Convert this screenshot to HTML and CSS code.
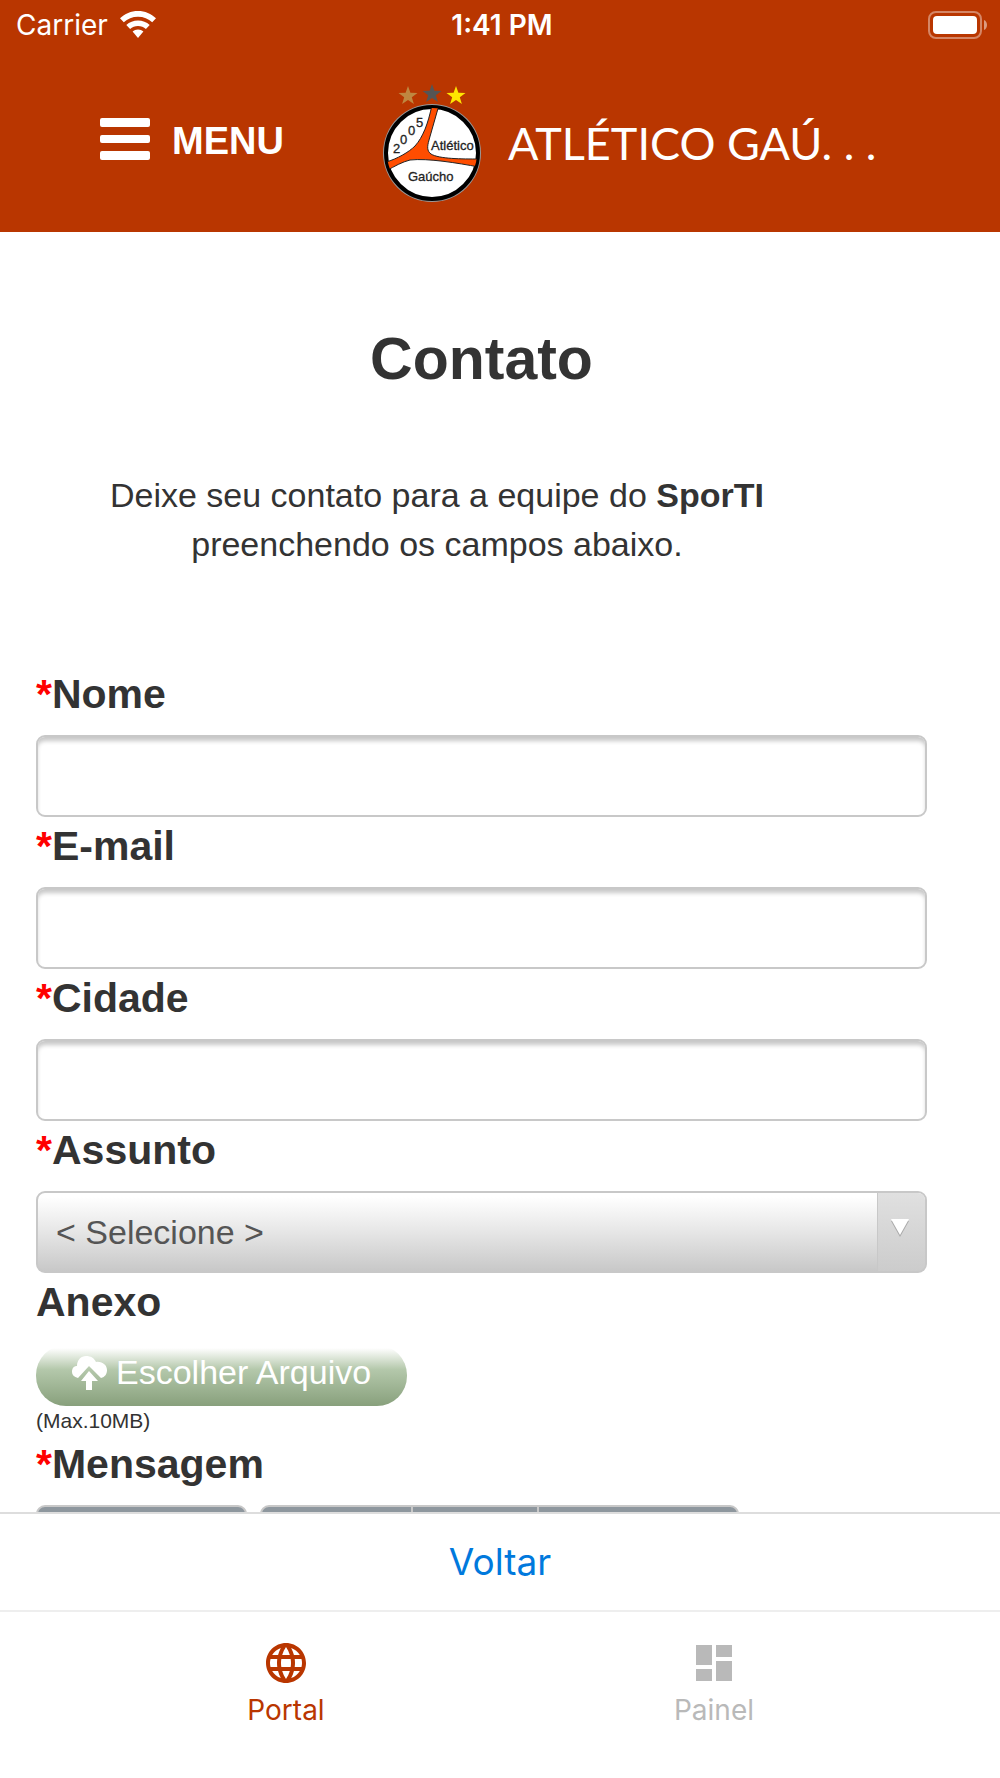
FILE: index.html
```html
<!DOCTYPE html>
<html lang="pt-BR">
<head>
  <meta charset="UTF-8">
  <meta name="viewport" content="width=device-width, initial-scale=1">
  <title>Contato</title>
  <link rel="stylesheet" href="styles.css">
</head>
<body>
  <header class="header">
    <div class="status">
      <div class="carrier">
        <span>Carrier</span>
        <svg width="36" height="28" viewBox="0 0 36 28" fill="#fff">
          <path d="M18 0C11 0 4.800 2.700 0 7.300l3.800 4C7.500 7.800 12.500 5.800 18 5.800s10.500 2 14.200 5.500l3.800-4C31.200 2.700 25 0 18 0z"/>
          <path d="M18 9.500c-4.500 0-8.600 1.700-11.700 4.500l3.800 4c2.100-1.900 4.900-3 7.900-3s5.800 1.100 7.900 3l3.800-4c-3.100-2.800-7.200-4.500-11.700-4.500z"/>
          <path d="M18 18.500c-2.100 0-4 .8-5.400 2.100L18 27l5.400-6.400c-1.400-1.300-3.300-2.100-5.400-2.100z"/>
        </svg>
      </div>
      <span class="time">1:41 PM</span>
      <svg class="battery" width="60" height="28" viewBox="0 0 60 28">
        <rect x="1" y="1" width="52" height="26" rx="7" fill="none" stroke="#fff" stroke-opacity=".4" stroke-width="2"/>
        <rect x="5" y="5" width="44" height="18" rx="4" fill="#fff"/>
        <path d="M56 9c4 1.500 4 8.500 0 10z" fill="#fff" fill-opacity=".5"/>
      </svg>
    </div>
    <div class="navbar">
      <button class="menu" type="button">
        <svg width="50" height="42" viewBox="0 0 50 42" fill="#fff">
          <rect width="50" height="9" rx="2"/>
          <rect y="17" width="50" height="8" rx="2"/>
          <rect y="33" width="50" height="9" rx="2"/>
        </svg>
        <span>MENU</span>
      </button>
      <a class="club" href="#">
        <svg class="crest" width="100" height="120" viewBox="0 0 100 120">
          <defs>
            <path id="star" d="M0-10 2.400-3.200 9.500-3.100 3.800 1.200 5.900 8.100 0 4 -5.900 8.100 -3.800 1.200 -9.500-3.100 -2.400-3.200z"/>
            <clipPath id="ball"><circle cx="50" cy="70" r="45"/></clipPath>
          </defs>
          <use href="#star" x="26" y="13" fill="#bf8740"/>
          <use href="#star" x="50" y="11" fill="#555"/>
          <use href="#star" x="74" y="13" fill="#ffe600"/>
          <circle cx="50" cy="70" r="49" fill="#999"/>
          <circle cx="50" cy="70" r="46" fill="#fff" stroke="#000" stroke-width="4"/>
          <path clip-path="url(#ball)" fill="#ff4d00" stroke="#222" stroke-width="1"
            d="M50 22C46 41 41 54 33 63 27 69 15 76 4 79L4 88C13 83 20 79 28 77 46 75 75 80 97 84L97 76C80 76 57 76 49 71 45 68 45 64 47 57L57 22z"/>
          <g class="crest-text">
            <text x="11" y="70">2</text>
            <text x="18" y="61">0</text>
            <text x="26" y="52">0</text>
            <text x="34" y="44">5</text>
            <text x="49" y="67">Atlético</text>
            <text x="26" y="98">Gaúcho</text>
          </g>
        </svg>
        <span>ATLÉTICO GAÚ. . .</span>
      </a>
    </div>
  </header>

  <main class="content">
    <h1>Contato</h1>
    <p class="intro">Deixe seu contato para a equipe do <strong>SporTI</strong> preenchendo os campos abaixo.</p>

    <form class="form">
      <label for="nome"><span class="required">*</span>Nome</label>
      <input class="field" type="text" id="nome">

      <label for="email"><span class="required">*</span>E-mail</label>
      <input class="field" type="email" id="email">

      <label for="cidade"><span class="required">*</span>Cidade</label>
      <input class="field" type="text" id="cidade">

      <label for="assunto"><span class="required">*</span>Assunto</label>
      <div class="select">
        <select class="field" id="assunto">
          <option>&lt; Selecione &gt;</option>
        </select>
        <span class="arrow">
          <svg width="18" height="18" viewBox="0 0 18 18">
            <path d="M0 2h18L9 18z" fill="#aaa"/>
            <path d="M0 0h18L9 16z" fill="#fff"/>
          </svg>
        </span>
      </div>

      <label for="anexo">Anexo</label>
      <div class="upload">
        <svg width="36" height="34" viewBox="0 0 36 34" fill="#fff">
          <path d="M6 22C2 21 0 19 0 16c0-4 2-6 5-6C5 4 9 0 14 0c5 0 8 2 10 6 6-1 11 3 11 8 0 4-2 7-6 8L17 10z"/>
          <path d="M17 15l9 10h-6v9h-6v-9H9z"/>
        </svg>
        <span>Escolher Arquivo</span>
        <input type="file" id="anexo">
      </div>
      <small>(Max.10MB)</small>

      <label for="mensagem"><span class="required">*</span>Mensagem</label>
      <div class="toolbar">
        <div class="group style"></div>
        <div class="group format">
          <span></span>
          <span></span>
          <span></span>
        </div>
      </div>
      <textarea class="field" id="mensagem"></textarea>
    </form>
  </main>

  <div class="back"><a href="#">Voltar</a></div>

  <nav class="tabs">
    <a class="active" href="#">
      <svg width="48" height="48" viewBox="0 0 24 24" fill="currentColor">
        <path d="M11.990 2C6.470 2 2 6.480 2 12s4.470 10 9.990 10C17.520 22 22 17.520 22 12S17.520 2 11.990 2zm6.930 6h-2.950c-.32-1.250-.78-2.450-1.380-3.560 1.840.63 3.370 1.910 4.330 3.560zM12 4.040c.83 1.200 1.480 2.530 1.910 3.960h-3.820c.43-1.430 1.080-2.760 1.910-3.960zM4.260 14C4.100 13.360 4 12.690 4 12s.1-1.360.26-2h3.380c-.08.66-.14 1.320-.14 2s.06 1.340.14 2H4.260zm.82 2h2.950c.32 1.250.78 2.450 1.380 3.560-1.840-.63-3.370-1.900-4.330-3.560zm2.950-8H5.080c.96-1.660 2.490-2.930 4.330-3.560C8.810 5.550 8.350 6.750 8.030 8zM12 19.960c-.83-1.200-1.480-2.530-1.910-3.960h3.820c-.43 1.430-1.080 2.760-1.910 3.960zM14.340 14H9.660c-.09-.66-.16-1.320-.16-2s.07-1.350.16-2h4.680c.09.65.16 1.320.16 2s-.07 1.340-.16 2zm.25 5.560c.6-1.110 1.060-2.310 1.380-3.560h2.950c-.96 1.650-2.490 2.930-4.330 3.560zM16.360 14c.08-.66.14-1.320.14-2s-.06-1.340-.14-2h3.380c.16.64.26 1.310.26 2s-.1 1.360-.26 2h-3.380z"/>
      </svg>
      <span>Portal</span>
    </a>
    <a href="#">
      <svg width="48" height="48" viewBox="0 0 24 24" fill="currentColor">
        <path d="M3 13h8V3H3v10zm0 8h8v-6H3v6zm10 0h8V11h-8v10zm0-18v6h8V3h-8z"/>
      </svg>
      <span>Painel</span>
    </a>
  </nav>
</body>
</html>
```

FILE: styles.css
```css
* {
  box-sizing: border-box;
}
body {
  margin: 0;
  height: 100vh;
  display: flex;
  flex-direction: column;
  background: #fff;
  color: #333;
  font-family: "Liberation Sans", Arial, sans-serif;
  font-size: 34px;
}
svg {
  display: block;
  flex: none;
}
a {
  text-decoration: none;
}

/* header */
.header {
  background: #b93600;
  color: #fff;
}
.status {
  display: grid;
  grid-template-columns: 1fr auto 1fr;
  align-items: center;
  height: 48px;
  padding: 2px 12px 0 16px;
  font-family: Inter, sans-serif;
  font-size: 28px;
}
.carrier {
  display: flex;
  align-items: center;
  gap: 12px;
}
.time {
  font-weight: 600;
}
.battery {
  justify-self: end;
}
.navbar {
  display: flex;
  align-items: center;
  gap: 98px;
  height: 184px;
  padding: 0 100px 2px;
}
.menu {
  display: flex;
  align-items: center;
  gap: 22px;
  padding: 0;
  border: 0;
  background: none;
  color: #fff;
  font-family: inherit;
  font-size: 38px;
  font-weight: bold;
}
.menu span {
  padding-top: 4px;
}
.club {
  display: flex;
  align-items: center;
  gap: 26px;
  margin-top: 8px;
  color: #fff;
  font-family: Lato, sans-serif;
  font-size: 45px;
  white-space: nowrap;
}
.crest-text {
  fill: #222;
  stroke: #222;
  stroke-width: .3px;
  font-family: "Liberation Sans", Arial, sans-serif;
  font-size: 13px;
}

/* page */
.content {
  flex: 1;
  min-height: 0;
  overflow-y: auto;
  scrollbar-width: none;
  padding: 87px 73px 40px 36px;
}
h1 {
  margin: 0 0 72px;
  font-size: 59px;
  line-height: 80px;
  text-align: center;
}
.intro {
  width: 90%;
  margin: 0 0 96px;
  padding: 0 60px;
  line-height: 49px;
  text-align: center;
}
.form label {
  display: block;
  padding-bottom: 12px;
  font-size: 41px;
  font-weight: bold;
  line-height: 58px;
}
.required {
  color: #f00;
}
.field {
  display: block;
  width: 100%;
  height: 82px;
  padding: 0 18px;
  border: 2px solid #c8c8c8;
  border-radius: 9px;
  background: #fff;
  box-shadow: inset 0 5px 4px -1px #c8c8c8;
  color: #555;
  font-family: inherit;
  font-size: 34px;
}
.select {
  position: relative;
}
.select .field {
  appearance: none;
  background: linear-gradient(#fff 5%, #e6e6e6 50%, #c8c8c8);
  box-shadow: none;
}
/* drop-down handle over the right end of the select */
.arrow {
  position: absolute;
  top: 2px;
  right: 2px;
  bottom: 2px;
  width: 48px;
  display: flex;
  justify-content: center;
  padding: 26px 3px 0 0;
  border-left: 1px solid #c8c8c8;
  border-radius: 0 7px 7px 0;
  background: linear-gradient(#e0e0e0, #ccc);
  pointer-events: none;
}
.upload {
  position: relative;
  display: flex;
  align-items: center;
  gap: 8px;
  width: fit-content;
  height: 61px;
  margin-top: 2px;
  padding: 0 36px 6px;
  border-radius: 30px;
  background: linear-gradient(#fff 5%, #b4c8ab 40%, #88a07c);
  color: #fff;
}
.upload input {
  position: absolute;
  inset: 0;
  width: 100%;
  opacity: 0;
}
small {
  display: block;
  font-size: 21px;
  line-height: 29px;
}
.toolbar {
  display: flex;
  gap: 13px;
}
.group {
  display: flex;
  height: 60px;
  border: 2px solid #c8c8c8;
  border-radius: 9px;
  background: #8e979e;
}
.style {
  width: 211px;
}
.format {
  width: 479px;
}
.format span {
  flex: 5;
  border-left: 2px solid #c8c8c8;
}
.format span:first-child {
  flex: 6;
  border-left: 0;
}
.format span:last-child {
  flex: 8;
}

/* bottom bars */
.back {
  height: 98px;
  border-top: 2px solid #ddd;
  font-family: Inter, sans-serif;
  font-size: 37px;
  line-height: 96px;
  text-align: center;
}
.back a {
  color: #0079dd;
}
.tabs {
  display: flex;
  height: 168px;
  padding: 27px 72px 0;
  border-top: 2px solid #eee;
  font-family: Inter, sans-serif;
  font-size: 28px;
  line-height: 46px;
}
.tabs a {
  flex: 1;
  display: flex;
  flex-direction: column;
  align-items: center;
  color: #b9b9b9;
}
.tabs .active {
  color: #b93600;
}
```
